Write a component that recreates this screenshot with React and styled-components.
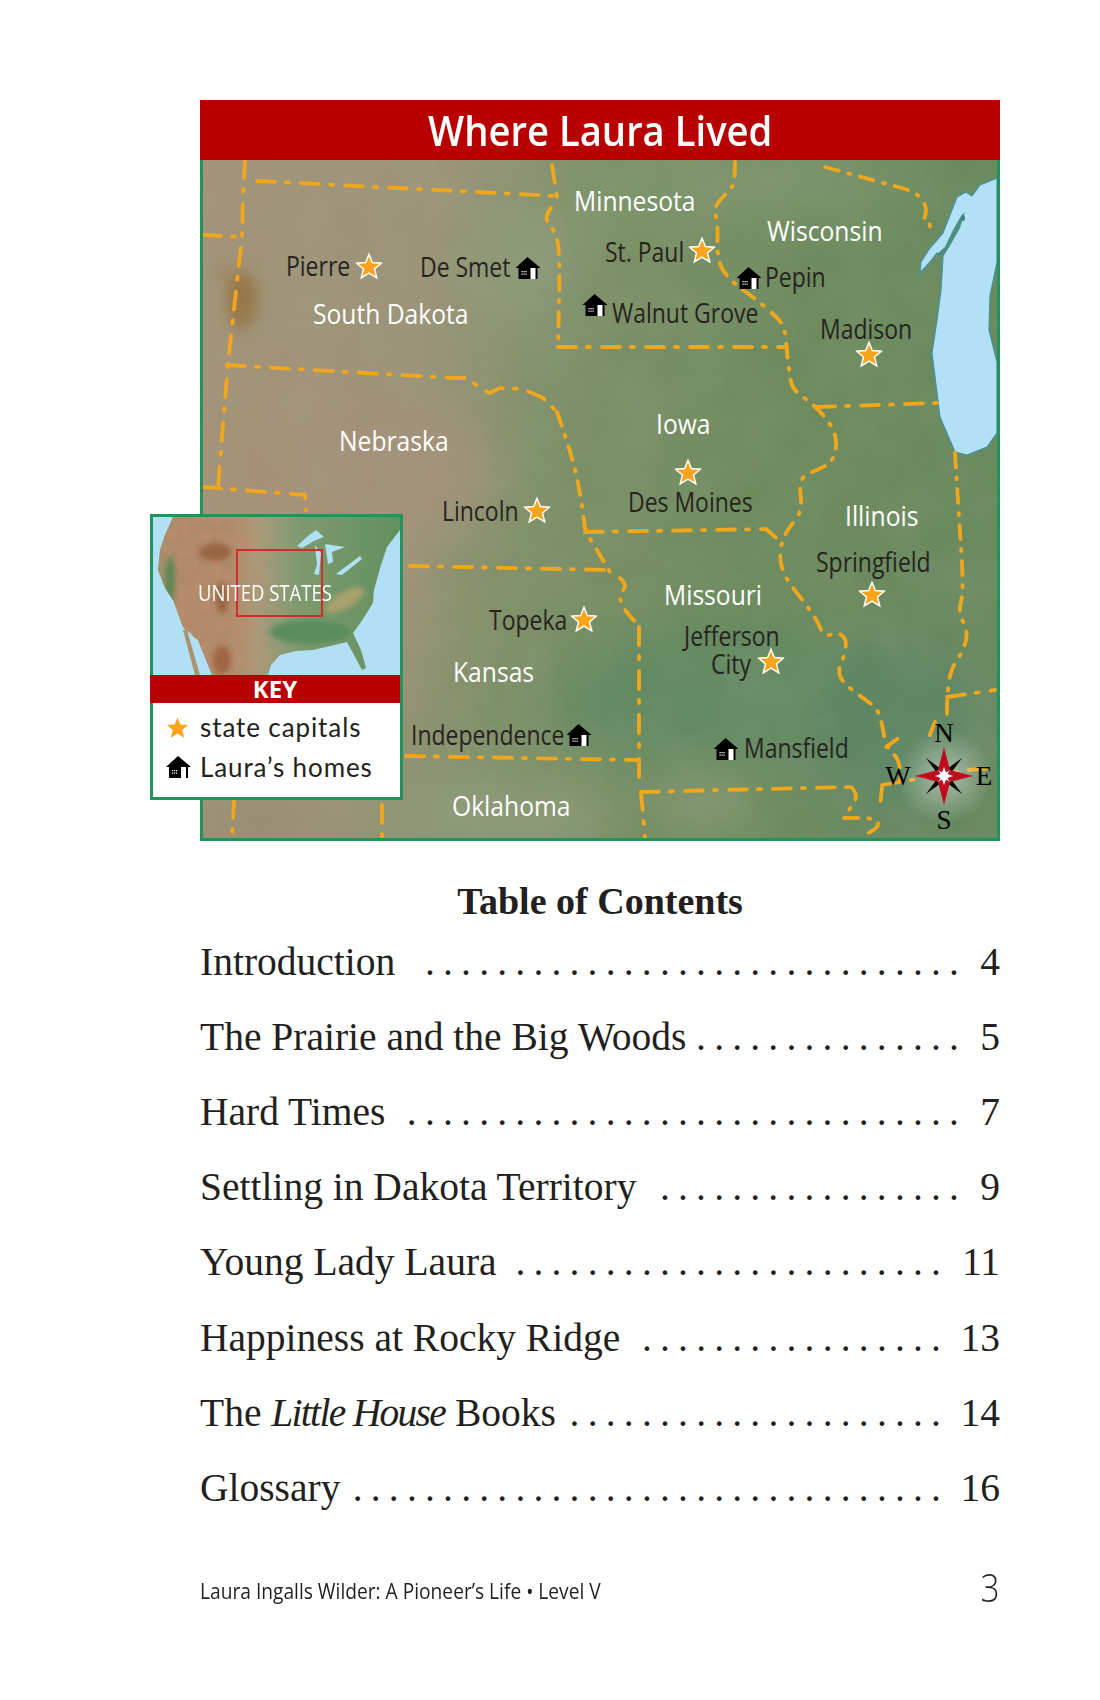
import styled, { createGlobalStyle } from "styled-components";

// all map coordinates below are page pixels, the svg viewBox keeps them as they are
const MAP_X = 203;
const MAP_Y = 160;

const labels = [
  { text: "Minnesota", x: 574, y: 200, light: true },
  { text: "St. Paul", x: 605, y: 251 },
  { text: "Wisconsin", x: 767, y: 230, light: true },
  { text: "Pepin", x: 765, y: 276 },
  { text: "Walnut Grove", x: 612, y: 312 },
  { text: "Madison", x: 820, y: 328 },
  { text: "Pierre", x: 286, y: 265 },
  { text: "De Smet", x: 420, y: 266 },
  { text: "South Dakota", x: 313, y: 313, light: true },
  { text: "Nebraska", x: 339, y: 440, light: true },
  { text: "Iowa", x: 656, y: 423, light: true },
  { text: "Des Moines", x: 628, y: 501 },
  { text: "Lincoln", x: 442, y: 510 },
  { text: "Illinois", x: 845, y: 515, light: true },
  { text: "Springfield", x: 816, y: 561 },
  { text: "Missouri", x: 664, y: 594, light: true },
  { text: "Topeka", x: 489, y: 619 },
  { text: "Jefferson", x: 684, y: 635 },
  { text: "City", x: 711, y: 663 },
  { text: "Kansas", x: 453, y: 671, light: true },
  { text: "Independence", x: 411, y: 734 },
  { text: "Mansfield", x: 744, y: 747 },
  { text: "Oklahoma", x: 452, y: 805, light: true },
];

const stars = [
  [369, 266],
  [702, 250],
  [869, 354],
  [688, 472],
  [537, 510],
  [872, 594],
  [584, 619],
  [771, 661],
];

const homes = [
  [528, 268],
  [595, 305],
  [749, 278],
  [579, 735],
  [726, 749],
];

// borders that are nearly straight
const lines = [
  [[245, 160], [243, 197], [242, 237], [228, 363], [218, 487]],
  [[203, 235], [240, 237]],
  [[257, 181], [557, 196]],
  [[552, 165], [557, 197]],
  [[227, 365], [453, 378], [467, 378], [480, 388], [490, 393], [500, 388], [523, 389], [543, 398], [557, 412]],
  [[558, 347], [787, 347]],
  [[817, 407], [937, 403]],
  [[585, 532], [766, 529], [781, 542]],
  [[410, 566], [610, 570]],
  [[639, 627], [639, 783]],
  [[406, 756], [637, 760]],
  [[641, 792], [851, 787]],
  [[203, 487], [305, 495], [306, 510]],
  [[234, 800], [232, 838]],
  [[382, 805], [382, 838]],
  [[641, 792], [645, 838]],
  [[882, 785], [968, 770], [995, 768]],
  [[947, 697], [995, 690]],
];

// rivers, these get smoothed
const rivers = [
  [[551, 208], [543, 218], [556, 232], [560, 257], [558, 347]],
  [[557, 412], [573, 457], [583, 510], [585, 532], [591, 540], [610, 572]],
  [[620, 578], [628, 585], [618, 595], [626, 613], [641, 627]],
  [[735, 162], [735, 182], [730, 190], [713, 207], [718, 223], [717, 263], [733, 283], [753, 297], [777, 317], [785, 328], [787, 353], [790, 377], [793, 390], [817, 407], [837, 433], [835, 458], [823, 468], [798, 477], [803, 510], [789, 528], [783, 538], [779, 557], [785, 578], [805, 603], [818, 622], [824, 637], [838, 632], [847, 640], [844, 657], [838, 670], [842, 682], [863, 698], [877, 708], [882, 723], [886, 747], [900, 760], [900, 785]],
  [[825, 167], [883, 183], [910, 190], [922, 198], [927, 210], [923, 222], [930, 222], [930, 233]],
  [[955, 453], [958, 503], [964, 590], [958, 613], [968, 630], [964, 650], [950, 670], [947, 700], [947, 717]],
  [[851, 787], [859, 795], [849, 810]],
  [[844, 818], [877, 817], [879, 827], [865, 835]],
  [[935, 722], [929, 737]],
  [[882, 787], [880, 807]],
  [[886, 747], [900, 737]],
];

const smooth = (pts) => {
  let d = `M${pts[0][0]} ${pts[0][1]}`;
  for (let i = 1; i < pts.length - 1; i++) {
    const mx = (pts[i][0] + pts[i + 1][0]) / 2;
    const my = (pts[i][1] + pts[i + 1][1]) / 2;
    d += ` Q${pts[i][0]} ${pts[i][1]} ${mx} ${my}`;
  }
  const last = pts[pts.length - 1];
  return `${d} L${last[0]} ${last[1]}`;
};

const contents = [
  { title: "Introduction", dots: 30, page: 4 },
  { title: "The Prairie and the Big Woods", dots: 15, page: 5 },
  { title: "Hard Times", dots: 31, page: 7 },
  { title: "Settling in Dakota Territory", dots: 17, page: 9 },
  { title: "Young Lady Laura", dots: 24, page: 11 },
  { title: "Happiness at Rocky Ridge", dots: 17, page: 13 },
  { title: <>The <em>Little House</em> Books</>, dots: 21, page: 14 },
  { title: "Glossary", dots: 33, page: 16 },
];

const Star = ({ size = 27, outline = true }) => (
  <svg width={size} height={size} viewBox="0 0 24 24">
    <polygon
      points="12,1.5 15,8.9 23,9.5 16.9,14.7 18.9,22.6 12,18.3 5.1,22.6 7.1,14.7 1,9.5 9,8.9"
      fill="#f9a41c"
      stroke={outline ? "#fff" : "none"}
      strokeWidth="1.3"
    />
  </svg>
);

const House = () => (
  <svg width="25" height="22" viewBox="0 0 25 22">
    <polygon points="0,11 12,0 25,11 22,11 22,22 3,22 3,11" fill="#000" />
    <rect x="15" y="11" width="5" height="11" fill="#fff" />
    <g fill="#fff">
      <rect x="6" y="14" width="1.2" height="1.2" />
      <rect x="8" y="14" width="1.2" height="1.2" />
      <rect x="10" y="14" width="1.2" height="1.2" />
      <rect x="6" y="16.5" width="1.2" height="1.2" />
      <rect x="8" y="16.5" width="1.2" height="1.2" />
      <rect x="10" y="16.5" width="1.2" height="1.2" />
    </g>
  </svg>
);

const Terrain = () => (
  <TerrainSvg viewBox={`${MAP_X} ${MAP_Y} 794 678`} preserveAspectRatio="none">
    <defs>
      <linearGradient id="ground" x1="0" y1="0" x2="1" y2="0.15">
        <stop offset="0" stopColor="#a39379" />
        <stop offset="0.3" stopColor="#9c9478" />
        <stop offset="0.48" stopColor="#7f9069" />
        <stop offset="0.75" stopColor="#6e8b5e" />
        <stop offset="1" stopColor="#69895e" />
      </linearGradient>
      <filter id="soft" x="-30%" y="-30%" width="160%" height="160%">
        <feGaussianBlur stdDeviation="26" />
      </filter>
      <filter id="softer" x="-30%" y="-30%" width="160%" height="160%">
        <feGaussianBlur stdDeviation="7" />
      </filter>
      <filter id="edge">
        <feGaussianBlur stdDeviation="0.4" />
      </filter>
      <filter id="mottle" x="0" y="0" width="100%" height="100%">
        <feTurbulence type="fractalNoise" baseFrequency="0.018" numOctaves="4" seed="7" />
        <feColorMatrix values="0 0 0 0 0.35  0 0 0 0 0.42  0 0 0 0 0.3  0.9 0.9 0 0 -0.62" />
      </filter>
    </defs>
    <rect x={MAP_X} y={MAP_Y} width="794" height="678" fill="url(#ground)" />
    <g filter="url(#soft)">
      <ellipse cx="300" cy="560" rx="110" ry="190" fill="#a69177" />
      <ellipse cx="400" cy="470" rx="90" ry="70" fill="#a39279" />
      <ellipse cx="640" cy="200" rx="70" ry="40" fill="#7c9468" />
      <ellipse cx="520" cy="260" rx="50" ry="70" fill="#8d9a78" />
      <ellipse cx="720" cy="700" rx="170" ry="80" fill="#638a62" />
      <ellipse cx="900" cy="730" rx="90" ry="90" fill="#5f8663" />
      <ellipse cx="780" cy="180" rx="120" ry="30" fill="#7f9570" />
      <ellipse cx="500" cy="820" rx="110" ry="40" fill="#8e9a78" />
      <ellipse cx="260" cy="820" rx="70" ry="40" fill="#998c71" />
      <ellipse cx="700" cy="800" rx="60" ry="30" fill="#84966f" />
    </g>
    <g filter="url(#softer)">
      <ellipse cx="242" cy="300" rx="16" ry="30" fill="#98774a" />
      <ellipse cx="220" cy="272" rx="5" ry="8" fill="#9a7f58" />
    </g>
    <rect x={MAP_X} y={MAP_Y} width="794" height="678" filter="url(#mottle)" opacity="0.18" />
    <path
      d="M997 178 L980 185 L972 196 L966 192 L957 197 L950 215 L943 233 L930 248 L921 262 L920 273 L930 262 L937 253 L943 257 L941 290 L937 320 L932 353 L936 385 L940 417 L955 452 L967 455 L987 447 L997 433 L997 362 L989 330 L990 296 L997 262 Z"
      fill="#b2e1f6"
      stroke="#3f92a0"
      strokeWidth="1.2"
    />
    <polygon points="965,212 961,216 953,230 945,247 937,254 943,257 951,244 960,228" fill="#4b8f83" />
    <ellipse cx="963" cy="218" rx="2" ry="3" fill="#3f7f8a" />
    <g filter="url(#edge)" fill="none" stroke="#f1a71c" strokeWidth="3.8" strokeLinejoin="round" strokeLinecap="round">
      {lines.map((pts, i) => (
        <polyline key={i} points={pts.join(" ")} strokeDasharray="18 11 3 12" />
      ))}
      {rivers.map((pts, i) => (
        <path key={i} d={smooth(pts)} strokeDasharray="14 10 2 10" />
      ))}
    </g>
  </TerrainSvg>
);

const Compass = () => (
  <CompassBox>
    <svg width="60" height="60" viewBox="-30 -30 60 60">
      <g fill="#000">
        <polygon points="-18,-18 -3,-7 3,-3 7,3 18,18 3,7 -3,3 -7,-3" />
        <polygon points="18,-18 7,-3 3,3 -3,7 -18,18 -7,3 -3,-3 3,-7" />
      </g>
      <g fill="#c00d1e">
        <polygon points="0,-29 6,-6 0,-3 -6,-6" />
        <polygon points="0,29 6,6 0,3 -6,6" />
        <polygon points="-29,0 -6,-6 -3,0 -6,6" />
        <polygon points="29,0 6,-6 3,0 6,6" />
      </g>
      <polygon
        points="0,-9 2,-3.5 6,-6 3.5,-2 9,0 3.5,2 6,6 2,3.5 0,9 -2,3.5 -6,6 -3.5,2 -9,0 -3.5,-2 -6,-6 -2,-3.5"
        fill="#fff"
      />
    </svg>
    <CompassLetter $x={0} $y={-43}>N</CompassLetter>
    <CompassLetter $x={0} $y={44}>S</CompassLetter>
    <CompassLetter $x={-46} $y={0}>W</CompassLetter>
    <CompassLetter $x={40} $y={0}>E</CompassLetter>
  </CompassBox>
);

const UsMap = () => (
  <InsetSvg viewBox="153 517 247 158" preserveAspectRatio="none">
    <defs>
      <linearGradient id="usGround" x1="0" y1="0" x2="1" y2="0">
        <stop offset="0" stopColor="#7d9a6a" />
        <stop offset="0.1" stopColor="#ad8a68" />
        <stop offset="0.3" stopColor="#ad8a68" />
        <stop offset="0.42" stopColor="#a99c7e" />
        <stop offset="0.6" stopColor="#7d9a6e" />
        <stop offset="1" stopColor="#62905f" />
      </linearGradient>
      <linearGradient id="usFade" x1="0" y1="0" x2="1" y2="0">
        <stop offset="0" stopColor="#fff" />
        <stop offset="0.3" stopColor="#fff" />
        <stop offset="0.5" stopColor="#000" />
      </linearGradient>
      <mask id="westOnly">
        <rect x="153" y="517" width="247" height="158" fill="url(#usFade)" />
      </mask>
      <clipPath id="land">
        <path d="M173 517 L165 535 L160 550 L158 570 L165 588 L173 600 L183 627 L192 636 L198 640 L212 675 L268 675 L271 665 L280 655 L296 651 L313 650 L330 646 L347 642 L354 655 L362 670 L366 668 L361 650 L353 633 L361 622 L373 603 L374 590 L381 565 L387 547 L400 530 L400 517 Z" />
      </clipPath>
      <filter id="usDetail" x="-20%" y="-20%" width="140%" height="140%">
        <feGaussianBlur stdDeviation="2.5" />
      </filter>
      <filter id="usMottle" x="0" y="0" width="100%" height="100%">
        <feTurbulence type="fractalNoise" baseFrequency="0.09" numOctaves="3" seed="4" />
        <feColorMatrix values="0 0 0 0 0.48  0 0 0 0 0.26  0 0 0 0 0.15  1.6 1.4 0 0 -0.95" />
      </filter>
    </defs>
    <rect x="153" y="517" width="247" height="158" fill="#b1e0f4" />
    <g clipPath="url(#land)">
      <rect x="153" y="517" width="247" height="158" fill="url(#usGround)" />
      <g mask="url(#westOnly)">
        <rect x="153" y="517" width="247" height="158" filter="url(#usMottle)" />
      </g>
      <g filter="url(#usDetail)">
        <ellipse cx="215" cy="552" rx="16" ry="9" fill="#8f5733" opacity="0.7" />
        <ellipse cx="222" cy="598" rx="6" ry="16" fill="#8f5733" opacity="0.7" />
        <ellipse cx="170" cy="580" rx="5" ry="24" fill="#5f8755" />
        <ellipse cx="222" cy="660" rx="9" ry="14" fill="#9b5c3c" opacity="0.8" />
        <ellipse cx="345" cy="600" rx="22" ry="8" fill="#a8a170" transform="rotate(-30 345 600)" />
        <ellipse cx="310" cy="632" rx="40" ry="12" fill="#5c8d5e" />
      </g>
      <polygon points="186,630 192,634 206,675 199,675" fill="#b1e0f4" />
    </g>
    <polygon points="183,630 187,630 200,675 195,675" fill="#a9946f" />
    <g fill="#b1e0f4">
      <path d="M297 546 L308 536 L316 530 L324 537 L314 541 L302 548 Z" />
      <path d="M315 545 L317 565 L314 574 L319 575 L321 553 Z" />
      <path d="M325 544 L345 547 L332 552 L333 562 L328 564 Z" />
      <path d="M336 574 L360 556 L362 559 L342 575 Z" />
    </g>
    <rect x="237" y="550" width="85" height="66" fill="none" stroke="#d12c2c" strokeWidth="2" />
  </InsetSvg>
);

export default function App() {
  return (
    <Page>
      <GlobalStyle />
      <MapHeading><span>Where Laura Lived</span></MapHeading>
      <MapFrame>
        <Terrain />
        {labels.map((l) => (
          <PlaceLabel key={l.text} $x={l.x - MAP_X} $y={l.y - MAP_Y} $light={l.light}>
            {l.text}
          </PlaceLabel>
        ))}
        {stars.map(([x, y]) => (
          <Pin key={`${x}-${y}`} $x={x - MAP_X} $y={y - MAP_Y}>
            <Star />
          </Pin>
        ))}
        {homes.map(([x, y]) => (
          <Pin key={`${x}-${y}`} $x={x - MAP_X} $y={y - MAP_Y}>
            <House />
          </Pin>
        ))}
        <Compass />
        <Inset>
          <InsetMap>
            <UsMap />
            <UsLabel>UNITED STATES</UsLabel>
          </InsetMap>
          <KeyBar>KEY</KeyBar>
          <KeyList>
            <KeyRow>
              <KeyIcon><Star size={23} outline={false} /></KeyIcon>
              state capitals
            </KeyRow>
            <KeyRow>
              <KeyIcon><House /></KeyIcon>
              Laura’s homes
            </KeyRow>
          </KeyList>
        </Inset>
      </MapFrame>

      <TocHeading>Table of Contents</TocHeading>
      <TocList>
        {contents.map((c) => (
          <TocRow key={c.page}>
            <span>{c.title}</span>
            <Dots>{".".repeat(c.dots)}</Dots>
            <PageNo $wide={c.page > 9}>{c.page}</PageNo>
          </TocRow>
        ))}
      </TocList>

      <Footer>
        <FooterText>Laura Ingalls Wilder: A Pioneer’s Life • Level V</FooterText>
        <FooterPage>3</FooterPage>
      </Footer>
    </Page>
  );
}

const GlobalStyle = createGlobalStyle`
  html, body {
    margin: 0;
    background: #fff;
  }
`;

const Page = styled.div`
  box-sizing: border-box;
  width: 1100px;
  height: 1700px;
  padding: 100px 100px 0 200px;
  display: flex;
  flex-direction: column;
  color: #231f20;
`;

const MapHeading = styled.h1`
  margin: 0;
  height: 60px;
  line-height: 60px;
  background: #b80000;
  color: #fff;
  text-align: center;
  font-family: "Open Sans", sans-serif;
  font-weight: 600;
  font-size: 42px;

  span {
    display: inline-block;
    transform: scaleX(0.91);
  }
`;

const MapFrame = styled.div`
  position: relative;
  box-sizing: border-box;
  height: 681px;
  border: 3px solid #23925c;
  border-top: 0;
`;

const TerrainSvg = styled.svg`
  position: absolute;
  inset: 0;
  width: 100%;
  height: 100%;
  display: block;
`;

const PlaceLabel = styled.span`
  position: absolute;
  left: ${(p) => p.$x}px;
  top: ${(p) => p.$y}px;
  transform: translateY(-50%) scaleX(${(p) => (p.$light ? 0.88 : 0.82)});
  transform-origin: left center;
  font-family: "Open Sans", sans-serif;
  font-size: 28px;
  line-height: 1;
  white-space: nowrap;
  color: ${(p) => (p.$light ? "#fff" : "#26241f")};
`;

const Pin = styled.span`
  position: absolute;
  left: ${(p) => p.$x}px;
  top: ${(p) => p.$y}px;
  transform: translate(-50%, -50%);
  display: flex;
`;

const CompassBox = styled.div`
  position: absolute;
  left: 741px;
  top: 616px;
  width: 0;
  height: 0;
  display: flex;
  align-items: center;
  justify-content: center;

  &::before {
    content: "";
    position: absolute;
    width: 100px;
    height: 100px;
    border-radius: 50%;
    background: radial-gradient(circle, rgba(255, 255, 255, 0.38) 10%, rgba(255, 255, 255, 0) 68%);
  }

  svg {
    position: relative;
    flex: none;
  }
`;

const CompassLetter = styled.span`
  position: absolute;
  transform: translate(${(p) => p.$x}px, ${(p) => p.$y}px);
  font-family: "Liberation Serif", serif;
  font-size: 27px;
  line-height: 1;
  color: #000;
`;

const Inset = styled.div`
  position: absolute;
  left: -53px;
  top: 354px;
  box-sizing: border-box;
  width: 253px;
  height: 286px;
  background: #fff;
  border: 3px solid #23925c;
  display: flex;
  flex-direction: column;
`;

const InsetMap = styled.div`
  position: relative;
  height: 158px;
  flex: none;
`;

const InsetSvg = styled.svg`
  display: block;
  width: 100%;
  height: 100%;
`;

const UsLabel = styled.span`
  position: absolute;
  left: 45px;
  top: 64px;
  transform: scaleX(0.88);
  transform-origin: left center;
  font-family: "Open Sans", sans-serif;
  font-size: 21px;
  line-height: 24px;
  white-space: nowrap;
  color: #fff;
`;

const KeyBar = styled.div`
  height: 28px;
  line-height: 28px;
  margin: 0 0 0 -3px;
  background: #b80000;
  color: #fff;
  text-align: center;
  font-family: "Open Sans", sans-serif;
  font-weight: 700;
  font-size: 24px;
`;

const KeyList = styled.div`
  display: flex;
  flex-direction: column;
  gap: 10px;
  padding: 9px 0 0 11px;
`;

const KeyRow = styled.div`
  display: flex;
  align-items: center;
  height: 30px;
  font-family: "Lato", sans-serif;
  font-size: 26px;
  letter-spacing: 0.9px;
  color: #231f20;
`;

const KeyIcon = styled.span`
  width: 34px;
  flex: none;
  display: flex;
  justify-content: flex-start;
  margin-left: 2px;
`;

const TocHeading = styled.h2`
  margin: 36px 0 0;
  height: 47px;
  line-height: 48px;
  text-align: center;
  font-family: "Liberation Serif", serif;
  font-weight: 700;
  font-size: 38px;
`;

const TocList = styled.div`
  display: flex;
  flex-direction: column;
`;

const TocRow = styled.div`
  display: flex;
  align-items: center;
  height: 75.2px;
  font-family: "Liberation Serif", serif;
  font-size: 39.5px;
  white-space: nowrap;

  em {
    letter-spacing: -1.7px;
  }
`;

const Dots = styled.span`
  margin-left: auto;
  letter-spacing: 8.2px;
  margin-right: -8.2px;
`;

const PageNo = styled.span`
  width: ${(p) => (p.$wide ? "59px" : "41px")};
  flex: none;
  text-align: right;
`;

const Footer = styled.div`
  display: flex;
  justify-content: space-between;
  align-items: center;
  margin-top: 36px;
`;

const FooterText = styled.span`
  display: inline-block;
  margin-top: 9px;
  transform: scaleX(0.913);
  transform-origin: left center;
  font-family: "Open Sans", sans-serif;
  font-size: 21px;
  white-space: nowrap;
`;

const FooterPage = styled.span`
  transform: scaleX(0.88);
  transform-origin: right center;
  font-family: "Open Sans", sans-serif;
  font-weight: 300;
  font-size: 38px;
  line-height: 50px;
`;
